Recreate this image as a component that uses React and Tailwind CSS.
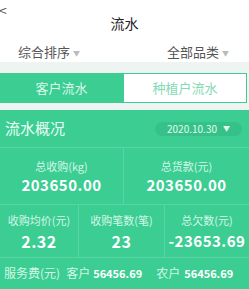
import React from 'react';

const font = { fontFamily: '"Noto Sans CJK SC", "Noto Sans", sans-serif' };

const App = () => {
  return (
    <div className="w-[249px] h-[289px] overflow-hidden bg-[#eef4f2]" style={font}>
      <div className="bg-white h-[62px] relative">
        <span className="absolute left-[-1px] top-[3px] text-[14px] text-[#555] leading-none">&lt;</span>
        <div className="pt-[14px] text-center text-[14px] leading-[18px] text-[#222]">流水</div>
        <div className="flex mt-[11px] text-[13px] leading-[18px] text-[#555]">
          <div className="pl-[18px]">综合排序 <span className="text-[7px] text-[#bbb] align-middle">▼</span></div>
          <div className="ml-auto pr-[20px]">全部品类 <span className="text-[7px] text-[#bbb] align-middle">▼</span></div>
        </div>
      </div>

      <div className="flex mt-[11px] h-[30px] pr-[2px]">
        <div className="w-[123px] bg-[#3ccd93] flex items-center justify-center text-[13px] text-[#d9f7ea]">客户流水</div>
        <div className="flex-1 bg-white border border-[#3ccd93] flex items-center justify-center text-[13px] text-[#86d9b5]">种植户流水</div>
      </div>

      <div className="mt-[7px] bg-[#3ccd93] h-[179px] text-white">
        <div className="flex items-center h-[38px] pl-[5px] pr-[7px] border-b border-white/15">
          <span className="text-[15px] text-[#eafff5]">流水概况</span>
          <div className="ml-auto w-[87px] h-[14px] rounded-full bg-[#32b982]/60 flex items-center justify-center gap-[6px] text-[10px] text-[#e3fbf0]">
            <span>2020.10.30</span>
            <span className="text-[7px]">▼</span>
          </div>
        </div>

        <div className="flex h-[57px] border-b border-white/15">
          <div className="w-[124px] flex flex-col items-center justify-center gap-[3px] border-r border-white/15">
            <span className="text-[11px] leading-[14px] text-[#d3f7e7]">总收购(kg)</span>
            <span className="text-[15px] leading-[17px] font-bold tracking-[0.5px]">203650.00</span>
          </div>
          <div className="flex-1 flex flex-col items-center justify-center gap-[3px]">
            <span className="text-[11px] leading-[14px] text-[#d3f7e7]">总货款(元)</span>
            <span className="text-[15px] leading-[17px] font-bold tracking-[0.5px]">203650.00</span>
          </div>
        </div>

        <div className="flex h-[53px] border-b border-white/15">
          <div className="w-[79px] flex flex-col items-center justify-center gap-[5px] border-r border-white/15">
            <span className="text-[11px] leading-[14px] text-[#d3f7e7] whitespace-nowrap">收购均价(元)</span>
            <span className="text-[16px] leading-[18px] font-bold tracking-[0.5px]">2.32</span>
          </div>
          <div className="w-[86px] flex flex-col items-center justify-center gap-[5px] border-r border-white/15">
            <span className="text-[11px] leading-[14px] text-[#d3f7e7] whitespace-nowrap">收购笔数(笔)</span>
            <span className="text-[16px] leading-[18px] font-bold tracking-[0.5px]">23</span>
          </div>
          <div className="flex-1 flex flex-col items-center justify-center gap-[5px]">
            <span className="text-[11px] leading-[14px] text-[#d3f7e7] whitespace-nowrap">总欠数(元)</span>
            <span className="text-[15px] leading-[18px] font-bold tracking-[0.5px] whitespace-nowrap">-23653.69</span>
          </div>
        </div>

        <div className="flex items-center h-[30px] pl-[4px] text-[12px] whitespace-nowrap">
          <span className="text-[#d3f7e7]">服务费(元)</span>
          <span className="ml-[6px] text-[#d3f7e7]">客户</span>
          <span className="ml-[3px] text-[11px] font-bold">56456.69</span>
          <span className="ml-[14px] text-[#d3f7e7]">农户</span>
          <span className="ml-[4px] text-[11px] font-bold">56456.69</span>
        </div>
      </div>
    </div>
  );
};

export default App;
